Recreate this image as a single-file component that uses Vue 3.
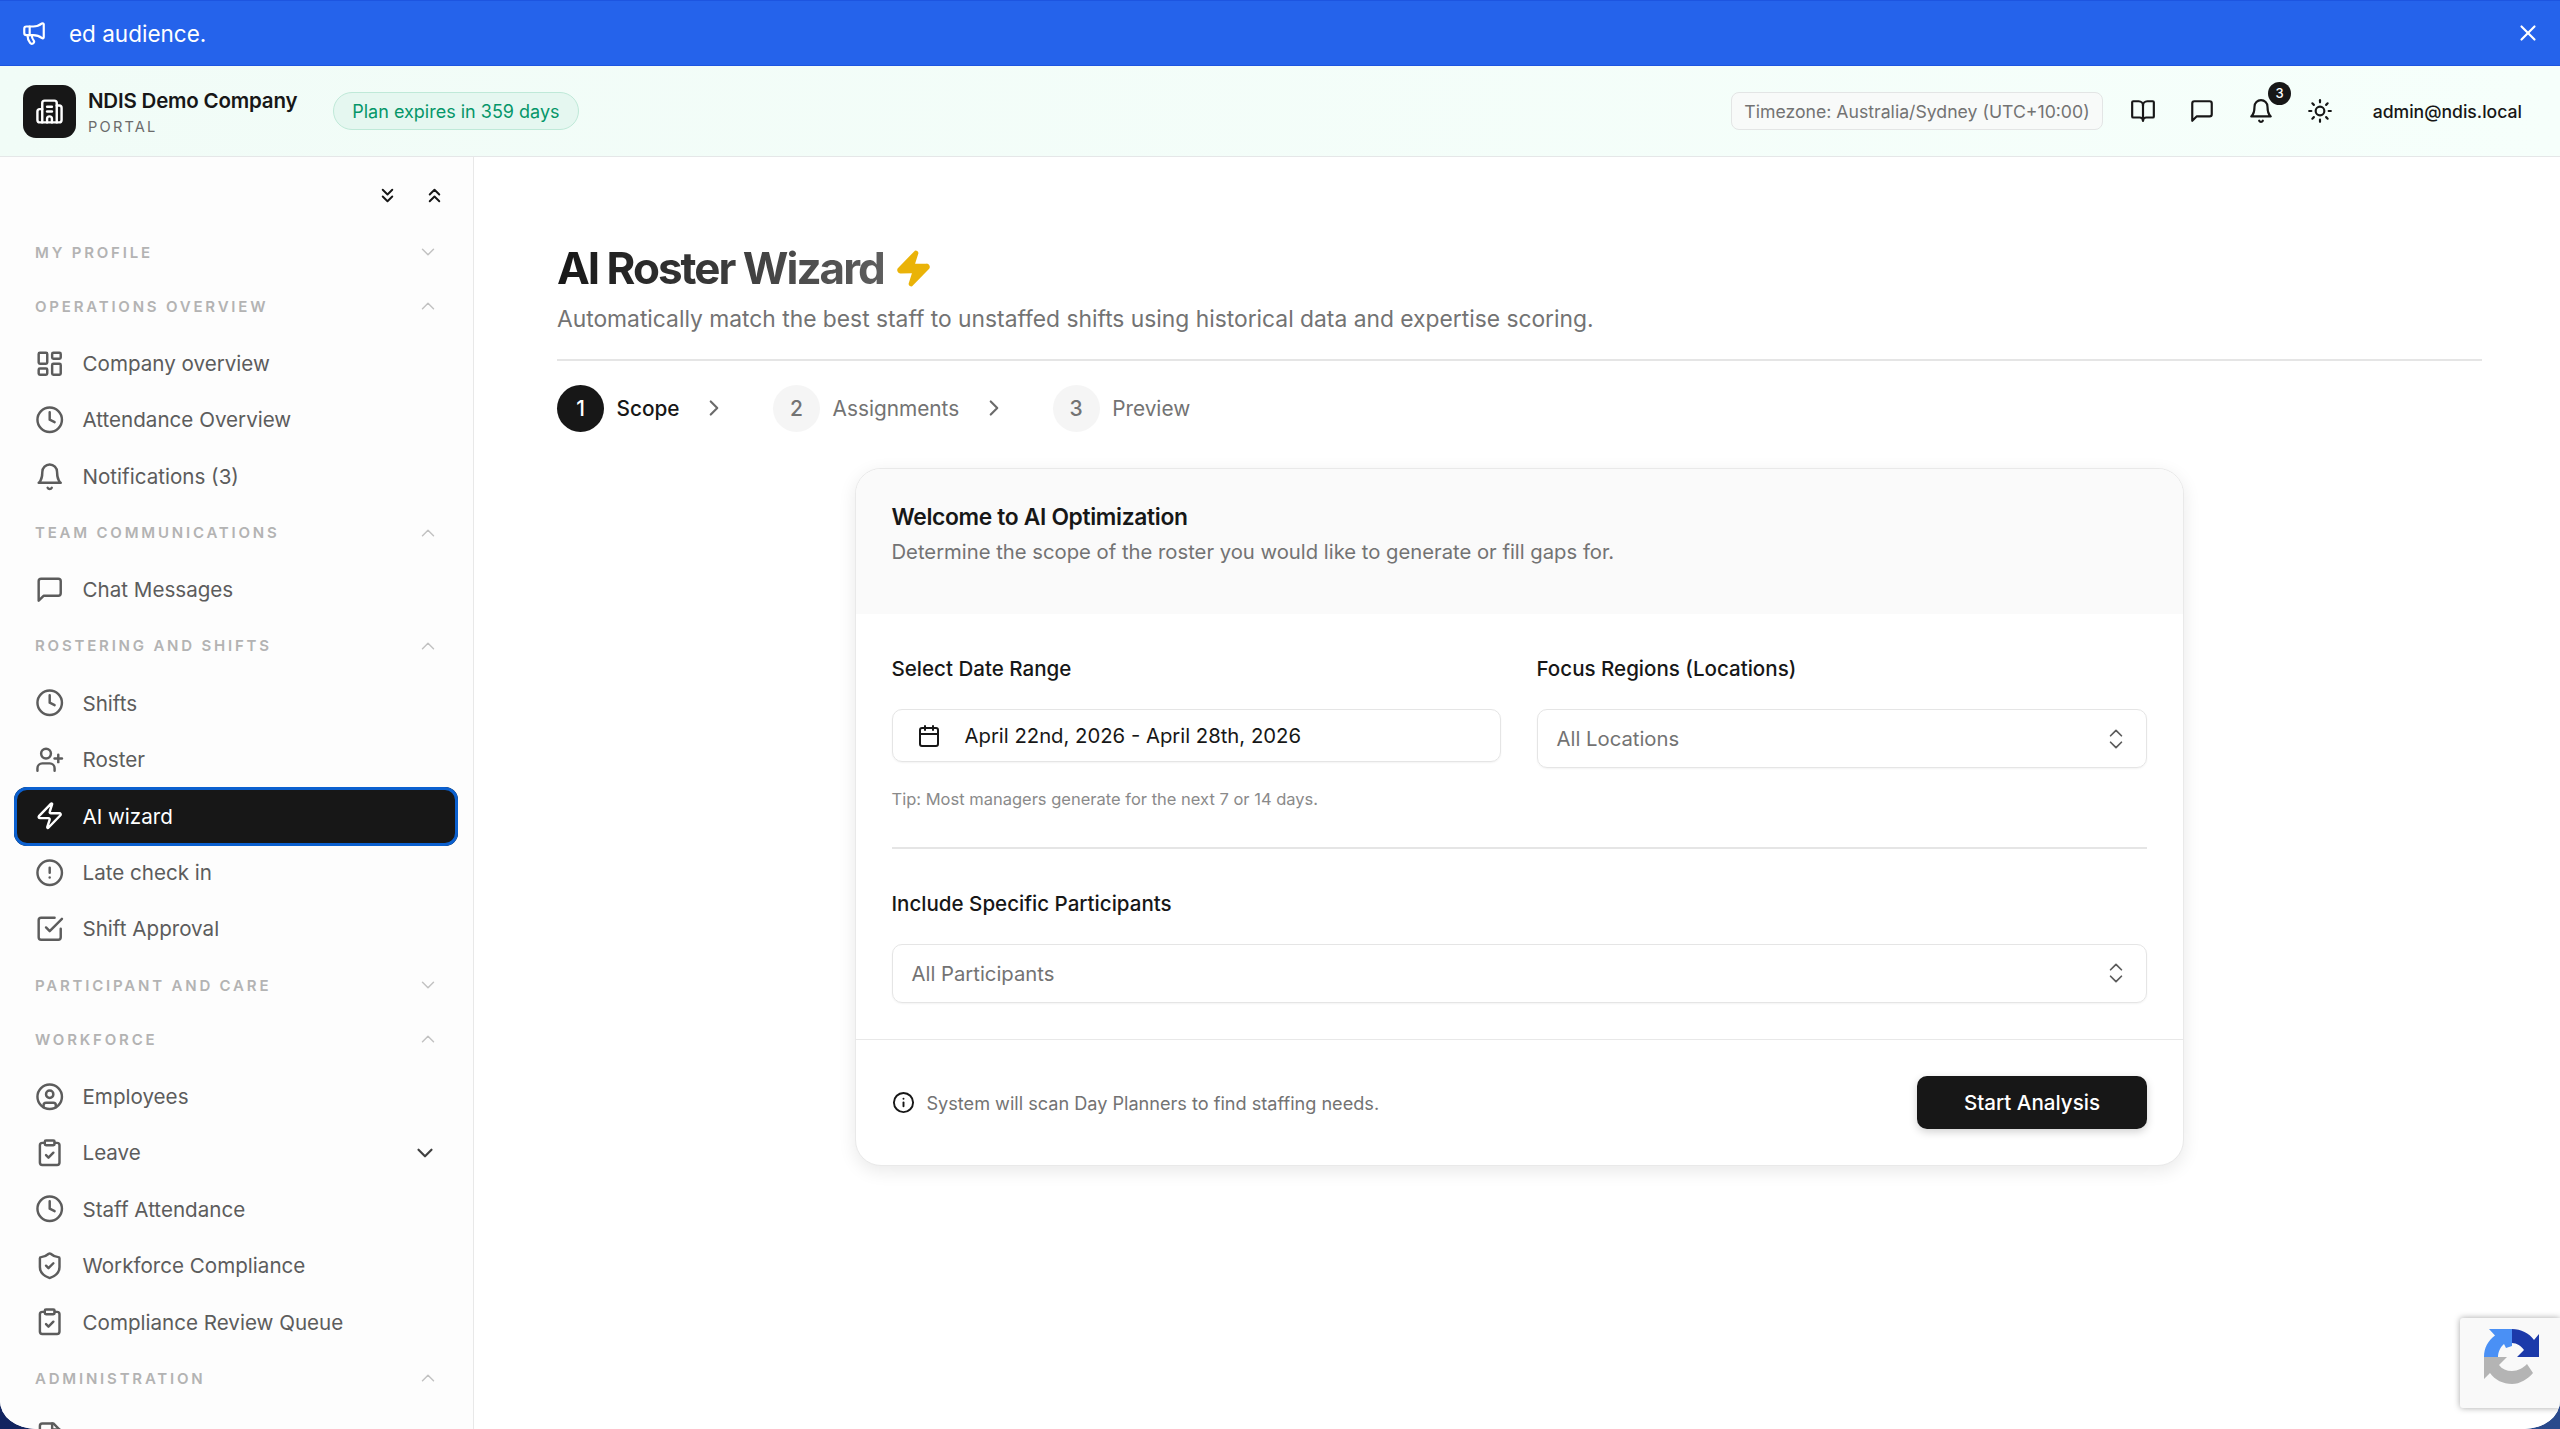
<script setup>
import { h } from 'vue'

const circle = (cx, cy, r) => `M${cx - r} ${cy}a${r} ${r} 0 1 0 ${2 * r} 0a${r} ${r} 0 1 0 ${-2 * r} 0`
const rect = (x, y, w, hh, r) =>
  `M${x + r} ${y}h${w - 2 * r}a${r} ${r} 0 0 1 ${r} ${r}v${hh - 2 * r}a${r} ${r} 0 0 1 ${-r} ${r}h${-(w - 2 * r)}a${r} ${r} 0 0 1 ${-r} ${-r}v${-(hh - 2 * r)}a${r} ${r} 0 0 1 ${r} ${-r}z`

const ICONS = {
  dashboard: [rect(3, 3, 7, 9, 1), rect(14, 3, 7, 5, 1), rect(14, 12, 7, 9, 1), rect(3, 16, 7, 5, 1)],
  clock: [circle(12, 12, 10), 'M12 6v6l4 2'],
  bell: ['M6 8a6 6 0 0 1 12 0c0 7 3 9 3 9H3s3-2 3-9', 'M10.3 21a1.94 1.94 0 0 0 3.4 0'],
  chat: ['M21 15a2 2 0 0 1-2 2H7l-4 4V5a2 2 0 0 1 2-2h14a2 2 0 0 1 2 2z'],
  userPlus: ['M16 21v-2a4 4 0 0 0-4-4H6a4 4 0 0 0-4 4v2', circle(9, 7, 4), 'M19 8v6', 'M22 11h-6'],
  zap: ['M4 14a1 1 0 0 1-.78-1.63l9.9-10.2a.5.5 0 0 1 .86.46l-1.92 6.02A1 1 0 0 0 13 10h7a1 1 0 0 1 .78 1.63l-9.9 10.2a.5.5 0 0 1-.86-.46l1.92-6.02A1 1 0 0 0 11 14z'],
  alert: [circle(12, 12, 10), 'M12 8v4', 'M12 16h.01'],
  check: ['m9 11 3 3L22 4', 'M21 12v7a2 2 0 0 1-2 2H5a2 2 0 0 1-2-2V5a2 2 0 0 1 2-2h11'],
  user: [circle(12, 12, 10), circle(12, 10, 3), 'M7 20.662V19a2 2 0 0 1 2-2h6a2 2 0 0 1 2 2v1.662'],
  clipboard: [rect(8, 2, 8, 4, 1), 'M16 4h2a2 2 0 0 1 2 2v14a2 2 0 0 1-2 2H6a2 2 0 0 1-2-2V6a2 2 0 0 1 2-2h2', 'm9 14 2 2 4-4'],
  shield: ['M20 13c0 5-3.5 7.5-7.66 8.95a1 1 0 0 1-.67-.01C7.5 20.5 4 18 4 13V6a1 1 0 0 1 1-1c2 0 4.5-1.2 6.24-2.72a1.17 1.17 0 0 1 1.52 0C14.51 3.81 17 5 19 5a1 1 0 0 1 1 1z', 'm9 12 2 2 4-4'],
  file: ['M15 2H6a2 2 0 0 0-2 2v16a2 2 0 0 0 2 2h12a2 2 0 0 0 2-2V7z', 'M14 2v5h6'],
  chevronsDown: ['m7 6 5 5 5-5', 'm7 13 5 5 5-5'],
  chevronsUp: ['m17 11-5-5-5 5', 'm17 18-5-5-5 5'],
  down: ['m6 9 6 6 6-6'],
  up: ['m18 15-6-6-6 6'],
  right: ['m9 18 6-6-6-6'],
  upDown: ['m7 15 5 5 5-5', 'm7 9 5-5 5 5'],
  calendar: ['M8 2v4', 'M16 2v4', rect(3, 4, 18, 18, 2), 'M3 10h18'],
  info: [circle(12, 12, 10), 'M12 16v-4', 'M12 8h.01'],
  book: ['M12 7v14', 'M3 18a1 1 0 0 1-1-1V4a1 1 0 0 1 1-1h5a4 4 0 0 1 4 4 4 4 0 0 1 4-4h5a1 1 0 0 1 1 1v13a1 1 0 0 1-1 1h-6a3 3 0 0 0-3 3 3 3 0 0 0-3-3z'],
  sun: [circle(12, 12, 4), 'M12 2v2', 'M12 20v2', 'm4.93 4.93 1.41 1.41', 'm17.66 17.66 1.41 1.41', 'M2 12h2', 'M20 12h2', 'm6.34 17.66-1.41 1.41', 'm19.07 4.93-1.41 1.41'],
  megaphone: ['M11 6a13 13 0 0 0 8.4-2.8A1 1 0 0 1 21 4v12a1 1 0 0 1-1.6.8A13 13 0 0 0 11 14H5a2 2 0 0 1-2-2V8a2 2 0 0 1 2-2z', 'M6 14a12 12 0 0 0 2.4 7.2 2 2 0 0 0 3.2-2.4A8 8 0 0 1 10 14', 'M8 6v8'],
  building: ['M10 12h4', 'M10 8h4', 'M14 21v-3a2 2 0 0 0-4 0v3', 'M6 10H4a2 2 0 0 0-2 2v7a2 2 0 0 0 2 2h16a2 2 0 0 0 2-2V9a2 2 0 0 0-2-2h-2', 'M6 21V5a2 2 0 0 1 2-2h8a2 2 0 0 1 2 2v16'],
  close: ['M18 6 6 18', 'm6 6 12 12']
}

const Icon = (props) =>
  h(
    'svg',
    { viewBox: '0 0 24 24', fill: 'none', stroke: 'currentColor', 'stroke-width': 2, 'stroke-linecap': 'round', 'stroke-linejoin': 'round' },
    ICONS[props.name].map((d) => h('path', { d }))
  )
Icon.props = ['name']

const nav = [
  { title: 'MY PROFILE', open: false, items: [] },
  {
    title: 'OPERATIONS OVERVIEW',
    open: true,
    items: [
      { label: 'Company overview', icon: 'dashboard' },
      { label: 'Attendance Overview', icon: 'clock' },
      { label: 'Notifications (3)', icon: 'bell' }
    ]
  },
  { title: 'TEAM COMMUNICATIONS', open: true, items: [{ label: 'Chat Messages', icon: 'chat' }] },
  {
    title: 'ROSTERING AND SHIFTS',
    open: true,
    items: [
      { label: 'Shifts', icon: 'clock' },
      { label: 'Roster', icon: 'userPlus' },
      { label: 'AI wizard', icon: 'zap', active: true },
      { label: 'Late check in', icon: 'alert' },
      { label: 'Shift Approval', icon: 'check' }
    ]
  },
  { title: 'PARTICIPANT AND CARE', open: false, items: [] },
  {
    title: 'WORKFORCE',
    open: true,
    items: [
      { label: 'Employees', icon: 'user' },
      { label: 'Leave', icon: 'clipboard', more: true },
      { label: 'Staff Attendance', icon: 'clock' },
      { label: 'Workforce Compliance', icon: 'shield' },
      { label: 'Compliance Review Queue', icon: 'clipboard' }
    ]
  },
  { title: 'ADMINISTRATION', open: true, items: [{ label: '', icon: 'file' }] }
]

const steps = [
  { n: 1, label: 'Scope', on: true },
  { n: 2, label: 'Assignments' },
  { n: 3, label: 'Preview' }
]
</script>

<template>
  <div class="app">
    <div class="banner">
      <Icon name="megaphone" class="banner-icon" />
      <span class="banner-text">ed audience.</span>
      <Icon name="close" class="banner-close" />
    </div>

    <header class="topbar">
      <div class="logo"><Icon name="building" class="logo-icon" /></div>
      <div class="brand">
        <div class="brand-name">NDIS Demo Company</div>
        <div class="brand-sub">PORTAL</div>
      </div>
      <div class="plan">Plan expires in 359 days</div>
      <div class="top-right">
        <div class="tz">Timezone: Australia/Sydney (UTC+10:00)</div>
        <div class="top-icons">
          <Icon name="book" class="top-icon" />
          <Icon name="chat" class="top-icon" />
          <div class="bell-wrap">
            <Icon name="bell" class="top-icon" />
            <span class="badge">3</span>
          </div>
          <Icon name="sun" class="top-icon" />
        </div>
        <div class="account">admin@ndis.local</div>
      </div>
    </header>

    <div class="body">
      <aside class="sidebar">
        <div class="side-tools">
          <Icon name="chevronsDown" class="tool-icon" />
          <Icon name="chevronsUp" class="tool-icon" />
        </div>
        <section v-for="s in nav" :key="s.title" class="group">
          <div class="group-head">
            <span>{{ s.title }}</span>
            <Icon :name="s.open ? 'up' : 'down'" class="group-chevron" />
          </div>
          <div v-if="s.items.length" class="group-list">
            <div v-for="it in s.items" :key="it.label" class="item" :class="{ active: it.active }">
              <Icon :name="it.icon" class="item-icon" />
              <span class="item-label">{{ it.label }}</span>
              <Icon v-if="it.more" name="down" class="item-more" />
            </div>
          </div>
        </section>
      </aside>

      <main class="main">
        <div class="title-row">
          <h1 class="title">AI Roster Wizard</h1>
          <svg class="title-bolt" viewBox="0 0 24 24"><path fill="#eab308" stroke="#eab308" stroke-width="2" stroke-linejoin="round" d="M4 14a1 1 0 0 1-.78-1.63l9.9-10.2a.5.5 0 0 1 .86.46l-1.92 6.02A1 1 0 0 0 13 10h7a1 1 0 0 1 .78 1.63l-9.9 10.2a.5.5 0 0 1-.86-.46l1.92-6.02A1 1 0 0 0 11 14z" /></svg>
        </div>
        <p class="subtitle">Automatically match the best staff to unstaffed shifts using historical data and expertise scoring.</p>
        <div class="rule"></div>

        <div class="steps">
          <template v-for="(st, i) in steps" :key="st.n">
            <div class="step" :class="{ on: st.on }">
              <span class="step-num">{{ st.n }}</span>
              <span class="step-label">{{ st.label }}</span>
            </div>
            <Icon v-if="i < steps.length - 1" name="right" class="step-chevron" />
          </template>
        </div>

        <div class="card">
          <div class="card-head">
            <h2 class="card-title">Welcome to AI Optimization</h2>
            <p class="card-sub">Determine the scope of the roster you would like to generate or fill gaps for.</p>
          </div>
          <div class="card-body">
            <div class="cols">
              <div class="col">
                <label class="label">Select Date Range</label>
                <div class="date-btn">
                  <Icon name="calendar" class="date-icon" />
                  <span>April 22nd, 2026 - April 28th, 2026</span>
                </div>
                <p class="tip">Tip: Most managers generate for the next 7 or 14 days.</p>
              </div>
              <div class="col">
                <label class="label">Focus Regions (Locations)</label>
                <div class="select">
                  <span>All Locations</span>
                  <Icon name="upDown" class="select-icon" />
                </div>
              </div>
            </div>
            <div class="divider"></div>
            <label class="label">Include Specific Participants</label>
            <div class="select">
              <span>All Participants</span>
              <Icon name="upDown" class="select-icon" />
            </div>
          </div>
          <div class="card-foot">
            <div class="foot-note">
              <Icon name="info" class="foot-icon" />
              <span>System will scan Day Planners to find staffing needs.</span>
            </div>
            <div class="primary">Start Analysis</div>
          </div>
        </div>
      </main>
    </div>

    <div class="recaptcha">
      <svg class="recaptcha-logo" viewBox="0 0 56 56">
        <path fill="#b4b4b4" d="M0 28H23L15 36C18 40 22.5 42 28 42C34 42 39 39 43 35L49 44C44 50 36 55 28 55C19 55 11 51 6 44L0 50Z" />
        <path fill="#4a90f5" d="M0 28C0 19 4 11.5 11 6.5L5 0H28V17L22 19L20 15C16.5 18 14 23 14 28Z" />
        <path fill="#1c3aaa" d="M28 0C37 0 45 4 50 11L55 5V28H33L40 21C37 17 33 14 28 14Z" />
      </svg>
    </div>
  </div>
</template>

<style>
html, body { margin: 0; background: linear-gradient(90deg, #12245f, #2a4a8c); }
</style>

<style scoped>
.app {
  height: 1429px;
  overflow: hidden;
  display: flex;
  flex-direction: column;
  position: relative;
  background: #fff;
  border-radius: 0 0 36px 36px / 0 0 28px 28px;
  font-family: Inter, "Liberation Sans", sans-serif;
  color: #171717;
}
.banner {
  height: 66px;
  flex: none;
  box-sizing: border-box;
  display: flex;
  align-items: center;
  padding: 0 19px 0 21px;
  background: #2563eb;
  border-top: 1.5px solid #1d55e0;
  border-bottom: 1.5px solid #1d55e0;
  color: #fff;
}
.banner-icon { width: 26px; height: 26px; flex: none; }
.banner-text { margin-left: 22px; font-size: 22.5px; }
.banner-close { width: 26px; height: 26px; margin-left: auto; }

.topbar {
  height: 91px;
  flex: none;
  box-sizing: border-box;
  display: flex;
  align-items: center;
  padding: 0 38px 0 23px;
  background: linear-gradient(90deg, #f1fcf7, #f6fffb);
  border-bottom: 1.6px solid #e5e7e8;
}
.logo {
  width: 53px;
  height: 53px;
  flex: none;
  border-radius: 13px;
  background: #171717;
  display: flex;
  align-items: center;
  justify-content: center;
  color: #fff;
}
.logo-icon { width: 29px; height: 29px; }
.brand { margin-left: 12px; }
.brand-name { font-size: 20.5px; font-weight: 600; line-height: 28px; letter-spacing: -0.2px; color: #171717; margin-top: 2px; }
.brand-sub { font-size: 14.6px; line-height: 20px; letter-spacing: 2.2px; color: #6b6b6b; margin-top: 2px; }
.plan {
  margin-left: 36px;
  height: 38px;
  box-sizing: border-box;
  display: flex;
  align-items: center;
  padding: 0 18px;
  border: 1.6px solid #bfe9d8;
  border-radius: 19px;
  background: #e5f7f0;
  color: #059669;
  font-size: 18px;
}
.top-right { margin-left: auto; display: flex; align-items: center; }
.tz {
  height: 38px;
  box-sizing: border-box;
  display: flex;
  align-items: center;
  padding: 0 12.5px;
  border: 1.6px solid #e3e5e5;
  border-radius: 8px;
  background: #f8faf9;
  color: #737373;
  font-size: 17.66px;
  white-space: nowrap;
}
.top-icons { display: flex; align-items: center; gap: 33px; margin-left: 27px; }
.top-icon { width: 26px; height: 26px; display: block; color: #171717; }
.bell-wrap { position: relative; }
.badge {
  position: absolute;
  left: 20px;
  top: -16.5px;
  width: 23px;
  height: 23px;
  border-radius: 50%;
  background: #171717;
  color: #fff;
  font-size: 13px;
  font-weight: 500;
  display: flex;
  align-items: center;
  justify-content: center;
}
.account { margin-left: 39.6px; font-size: 17.6px; font-weight: 500; color: #171717; white-space: nowrap; }

.body { flex: 1; display: flex; min-height: 0; }
.sidebar {
  width: 474px;
  flex: none;
  box-sizing: border-box;
  background: #fdfdfd;
  border-right: 1.6px solid #e8e8e8;
  overflow: hidden;
}
.side-tools {
  height: 68.2px;
  box-sizing: border-box;
  display: flex;
  justify-content: flex-end;
  gap: 24px;
  padding: 27px 27px 0 0;
  color: #171717;
}
.tool-icon { width: 23px; height: 23px; }
.group-head {
  height: 54px;
  box-sizing: border-box;
  padding: 0 34px 0 35px;
  display: flex;
  align-items: center;
  justify-content: space-between;
  font-size: 15px;
  font-weight: 600;
  letter-spacing: 2.8px;
  color: #b3b3b3;
}
.group-chevron { width: 22px; height: 22px; color: #c2c2c2; stroke-width: 1.6; }
.group-list { padding: 2px 0 1px; }
.item {
  height: 56.45px;
  box-sizing: border-box;
  margin: 0 15px 0 14px;
  padding: 0 20px 0 20.8px;
  display: flex;
  align-items: center;
  gap: 18.3px;
  border-radius: 13px;
  font-size: 20.6px;
  color: #5c5c5c;
}
.item-icon { width: 29.4px; height: 29.4px; flex: none; }
.item-more { width: 26px; height: 26px; margin-left: auto; color: #404040; }
.item.active { background: #171717; color: #fff; outline: 3px solid #0b60cf; outline-offset: -3px; height: 59px; margin-top: -1.3px; margin-bottom: -1.3px; }

.main {
  flex: 1;
  min-width: 0;
  box-sizing: border-box;
  padding: 82px 78px 0 83px;
  background: #fff;
}
.title-row { display: flex; align-items: center; gap: 10px; height: 58px; }
.title {
  margin: 0;
  font-size: 44px;
  font-weight: 700;
  letter-spacing: -2px;
  line-height: 58px;
  background: linear-gradient(90deg, #171717, #5e5e5e);
  -webkit-background-clip: text;
  background-clip: text;
  color: transparent;
}
.title-bolt { width: 39px; height: 39px; }
.subtitle { margin: 3.5px 0 0; font-size: 22.8px; line-height: 36px; color: #737373; }
.rule { height: 1.6px; margin-top: 22.5px; background: #e5e5e5; }
.steps { display: flex; align-items: center; margin-top: 24px; }
.step { display: flex; align-items: center; gap: 12.5px; }
.step-num {
  width: 47px;
  height: 47px;
  border-radius: 50%;
  background: #f5f5f5;
  color: #737373;
  display: flex;
  align-items: center;
  justify-content: center;
  font-size: 21px;
  font-weight: 500;
}
.step-label { font-size: 20.8px; font-weight: 400; color: #737373; }
.step.on .step-num { background: #171717; color: #fff; }
.step.on .step-label { color: #171717; font-weight: 500; }
.step-chevron { width: 26px; height: 26px; margin: 0 46px 0 21.5px; color: #6b6b6b; }

.card {
  width: 1329px;
  margin: 36px 0 0 298px;
  box-sizing: border-box;
  border: 1.6px solid #e9e9e9;
  border-radius: 26px;
  overflow: hidden;
  background: #fff;
  box-shadow: 0 5px 18px rgba(0, 0, 0, 0.09);
}
.card-head { padding: 31.4px 36px 46px 35.5px; background: #fafafa; }
.card-title { margin: 0; font-size: 22.8px; font-weight: 600; line-height: 34px; letter-spacing: -0.33px; color: #171717; }
.card-sub { margin: 2px 0 0; font-size: 20.25px; line-height: 32px; color: #737373; }
.card-body { padding: 40.5px 36px 36.5px 35.5px; }
.cols { display: grid; grid-template-columns: 609px 1fr; gap: 36px; }
.label { display: block; font-size: 20.55px; font-weight: 500; line-height: 30px; margin-bottom: 25px; color: #171717; }
.date-btn {
  height: 53px;
  box-sizing: border-box;
  display: flex;
  align-items: center;
  gap: 24px;
  padding: 0 24px;
  border: 1.6px solid #e5e5e5;
  border-radius: 10px;
  font-size: 20.3px;
  color: #171717;
  box-shadow: 0 1px 2px rgba(0, 0, 0, 0.05);
}
.date-icon { width: 24px; height: 24px; flex: none; }
.tip { margin: 25px 0 0; font-size: 16.5px; line-height: 24px; color: #8a8a8a; }
.select {
  height: 59px;
  box-sizing: border-box;
  display: flex;
  align-items: center;
  justify-content: space-between;
  padding: 0 17px 0 19px;
  border: 1.6px solid #e5e5e5;
  border-radius: 10px;
  font-size: 20.3px;
  color: #737373;
  box-shadow: 0 1px 2px rgba(0, 0, 0, 0.05);
}
.select-icon { width: 26px; height: 26px; color: #5c5c5c; stroke-width: 1.6; }
.divider { height: 1.6px; margin: 36px 0 39.5px; background: #e5e5e5; }
.card-foot {
  display: flex;
  align-items: center;
  justify-content: space-between;
  padding: 36px 36px 36px 35.5px;
  border-top: 1.6px solid #e8e8e8;
}
.foot-note { display: flex; align-items: center; gap: 12px; font-size: 18.13px; color: #737373; }
.foot-icon { width: 23px; height: 23px; color: #171717; }
.primary {
  width: 230px;
  height: 53px;
  box-sizing: border-box;
  border-radius: 10px;
  background: #171717;
  color: #fff;
  font-size: 20.6px;
  font-weight: 500;
  display: flex;
  align-items: center;
  justify-content: center;
  box-shadow: 0 3px 8px rgba(0, 0, 0, 0.18);
}

.recaptcha {
  position: absolute;
  right: 0;
  top: 1318px;
  width: 100px;
  height: 90px;
  box-sizing: border-box;
  padding: 11px 0 0 24px;
  background: #f9f9f9;
  border-radius: 3px 0 0 3px;
  box-shadow: 0 0 6px rgba(0, 0, 0, 0.35);
}
.recaptcha-logo { width: 56px; height: 56px; display: block; }
</style>
